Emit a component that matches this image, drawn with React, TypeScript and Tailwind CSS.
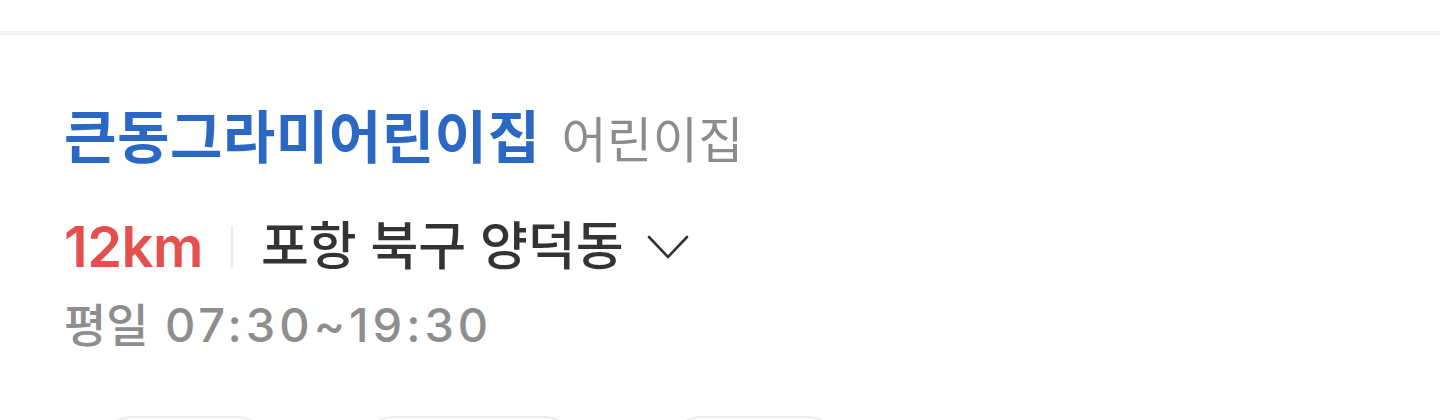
const chips = [
  { id: "a", w: "w-[175px]" },
  { id: "b", w: "w-[222px]" },
  { id: "c", w: "w-[177px]" },
];

export default function App() {
  return (
    <div
      className="w-[1440px] h-[420px] overflow-hidden bg-white"
      style={{ fontFamily: '"Inter", "Noto Sans CJK KR", sans-serif' }}
    >
      <div className="h-[31px]" />
      <div className="h-[4px] bg-[#efeff3]" />

      <div className="pl-[64px]">
        {/* name */}
        <div className="mt-[71px] flex items-baseline gap-[21px]">
          <span className="text-[57px] leading-[64px] font-bold tracking-[0.5px] text-[#2b68c4]">
            큰동그라미어린이집
          </span>
          <span className="text-[49px] leading-[64px] tracking-[0.5px] text-[#8c8c8c]">
            어린이집
          </span>
        </div>

        {/* distance + address */}
        <div className="mt-[46px] flex items-center h-[56px]">
          <span className="text-[56px] leading-[56px] font-semibold tracking-[-0.5px] text-[#e5504f]">
            12km
          </span>
          <span className="mx-[28px] w-[2px] h-[42px] bg-[#e8e8e8]" />
          <span className="text-[52px] leading-[56px] font-medium text-[#333333]">
            포항 북구 양덕동
          </span>
          <svg
            className="ml-[24px]"
            width="42"
            height="26"
            viewBox="0 0 42 26"
            fill="none"
            stroke="#333333"
            strokeWidth="2.6"
            strokeLinecap="round"
            strokeLinejoin="round"
          >
            <path d="M2 3 L21 23 L40 3" />
          </svg>
        </div>

        {/* hours */}
        <div className="mt-[24px] text-[46px] leading-[52px] text-[#8e8e8e] font-medium">
          평일{" "}
          <span className="ml-[4px] text-[47px] tracking-[4px]">07:30~19:30</span>
        </div>

        {/* tag chips, only their top edge is in view */}
        <div className="mt-[65px] flex gap-[86px] pl-[33px]">
          {chips.map((c) => (
            <div
              key={c.id}
              className={`${c.w} h-[72px] shrink-0 rounded-full border-2 border-[#ececf1]`}
            />
          ))}
        </div>
      </div>
    </div>
  );
}
